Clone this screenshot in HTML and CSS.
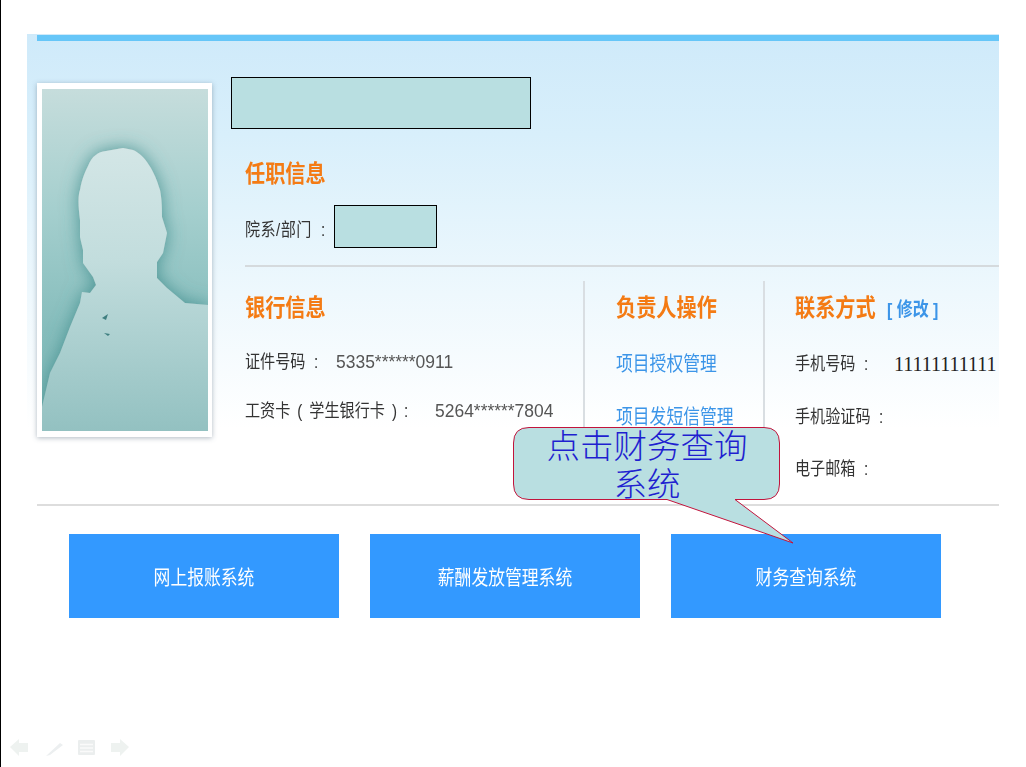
FILE: index.html
```html
<!DOCTYPE html>
<html>
<head>
    <meta charset="UTF-8">
    <title>财务查询系统</title>
    <link rel="stylesheet" href="styles.css">
</head>
<body>
    <div class="slide">
        <div class="panel">
            <div class="bar"></div>
            <div class="name-mask"></div>
            <div class="profile">
                <div class="photo">
                    <svg width="166" height="342" viewBox="42 89 166 342">
                        <defs>
                            <linearGradient id="bg" x1="0" y1="0" x2="0" y2="1">
                                <stop offset="0" stop-color="#c6dddc"/>
                                <stop offset="0.35" stop-color="#a5cfce"/>
                                <stop offset="0.7" stop-color="#86bdbc"/>
                                <stop offset="1" stop-color="#7db6b5"/>
                            </linearGradient>
                            <linearGradient id="fig" x1="0" y1="0" x2="0" y2="1">
                                <stop offset="0" stop-color="#d3e6e6"/>
                                <stop offset="0.4" stop-color="#c2dddd"/>
                                <stop offset="1" stop-color="#93c1c1"/>
                            </linearGradient>
                            <filter id="glow" x="-20%" y="-20%" width="140%" height="140%">
                                <feDropShadow dx="0" dy="0" stdDeviation="9" flood-color="#3f8e8e" flood-opacity="0.9"/>
                            </filter>
                        </defs>
                        <rect x="42" y="89" width="166" height="342" fill="url(#bg)"/>
                        <path filter="url(#glow)" fill="url(#fig)" d="M123 148 L133 150 C145 155 155 172 160 190 C162 200 162 210 162 217 L167 233 L163 253 L157 262 L157 278 L167 288 L185 303 L208 305 L208 431 L42 431 L42 407 L50 373 L60 353 L70 327 L80 303 L82 292 L90 293 L96 285 L93 277 L83 263 L83 250 L80 237 L80 220 C78 205 78 195 80 190 C82 178 86 170 88 166 C92 156 98 152 106 151 Z"/>
                        <path fill="#3f7f80" d="M102 318 L108 314 L106 320 Z M104 333 L110 334 L108 336 Z"/>
                    </svg>
                </div>
                <div class="info">
                    <h2 class="heading"><span class="sq">任职信息</span></h2>
                    <div class="dept">
                        <span class="dept-label"><span class="sq">院系/部门&nbsp;&nbsp;:</span></span>
                        <div class="dept-mask"></div>
                    </div>
                    <div class="rule"></div>
                    <div class="cols">
                        <div class="col col-bank">
                            <h2 class="heading"><span class="sq">银行信息</span></h2>
                            <div class="row first"><span class="sq">证件号码&nbsp;&nbsp;:</span><span class="sq num num-id">5335******0911</span></div>
                            <div class="row second"><span class="sq wide">工资卡 ( 学生银行卡 ) :</span><span class="sq num num-card">5264******7804</span></div>
                        </div>
                        <div class="col col-ops">
                            <h2 class="heading"><span class="sq">负责人操作</span></h2>
                            <div class="row first link"><span class="sq">项目授权管理</span></div>
                            <div class="row next link"><span class="sq">项目发短信管理</span></div>
                        </div>
                        <div class="col col-contact">
                            <h2 class="heading"><span class="sq">联系方式</span><a class="edit"><span class="sq">[ 修改 ]</span></a></h2>
                            <div class="row first"><span class="sq">手机号码&nbsp;&nbsp;:</span><span class="phone">11111111111</span></div>
                            <div class="row next"><span class="sq">手机验证码&nbsp;&nbsp;:</span></div>
                            <div class="row last"><span class="sq">电子邮箱&nbsp;&nbsp;:</span></div>
                        </div>
                    </div>
                </div>
            </div>
        </div>
        <div class="buttons">
            <div class="btn"><span class="sq">网上报账系统</span></div>
            <div class="btn"><span class="sq">薪酬发放管理系统</span></div>
            <div class="btn"><span class="sq">财务查询系统</span></div>
        </div>

        <div class="callout">
            <svg width="290" height="125" viewBox="512 426 290 125">
                <path fill="#b9dfe1" stroke="#c2143c" stroke-width="1" d="M529 427.5 H764 Q779.5 427.5 779.5 443 V484 Q779.5 499.5 764 499.5 H735 L793 543 L667 499.5 H529 Q513.5 499.5 513.5 484 V443 Q513.5 427.5 529 427.5 Z"/>
            </svg>
            <p class="callout-text">点击财务查询<br>系统</p>
        </div>

        <div class="nav">
            <svg width="125" height="22" viewBox="0 0 125 22">
                <path fill="#eef2f0" d="M0 10 L9 2 V6 H18 V15 H9 V19 Z"/>
                <path fill="#eceff0" d="M36 19 L50 6 L53 8 L40 18 Z"/>
                <rect x="68" y="3" width="17" height="15" rx="1" fill="#ebeeee"/>
                <path stroke="#fafafa" stroke-width="1.5" d="M70 7.5 H83 M70 11 H83 M70 14.5 H83"/>
                <path fill="#eef2f0" d="M119 10 L110 2 V6 H101 V15 H110 V19 Z"/>
            </svg>
        </div>
    </div>
</body>
</html>
```

FILE: styles.css
```css
* {
    box-sizing: border-box;
}
body {
    margin: 0;
    background-color: #fff;
    overflow: hidden;
    font-family: "Liberation Sans", "Noto Sans CJK SC", sans-serif;
}
.slide {
    position: relative;
    width: 1026px;
    height: 767px;
    border-left: 1px solid #000;
    padding-top: 34px;
}
.sq {
    display: inline-block;
    white-space: nowrap;
    transform: scaleX(.84);
    transform-origin: left center;
}

.panel {
    position: relative;
    margin-left: 26px;
    width: 972px;
    height: 472px;
    padding: 1px 0 0 10px;
    background: linear-gradient(#cfeafa 0, #d8effb 100px, #eef8fd 260px, #fff 395px);
}
.panel::after {
    content: "";
    position: absolute;
    left: 10px;
    right: 0;
    bottom: 0;
    height: 2px;
    background-color: #ddd;
}
.bar {
    height: 6px;
    background-color: #66c6f8;
}
.name-mask {
    position: absolute;
    left: 204px;
    top: 43px;
    width: 300px;
    height: 52px;
    background-color: #b9dfe1;
    border: 1px solid #000;
}
.profile {
    display: flex;
    margin-top: 42px;
}
.photo {
    width: 175px;
    height: 354px;
    padding: 6px 4px 6px 5px;
    background-color: #fff;
    box-shadow: 0 1px 5px rgba(80,100,120,.45);
    flex: none;
}
.photo svg {
    display: block;
}

.info {
    flex: 1;
    margin-left: 33px;
    padding-top: 76px;
}
.heading {
    margin: 0;
    height: 30px;
    line-height: 30px;
    font-size: 24px;
    font-weight: bold;
    color: #f47b14;
}
.dept {
    display: flex;
    align-items: center;
    margin-top: 16px;
    height: 43px;
    font-size: 18px;
    color: #333;
}
.dept-label {
    width: 89px;
    padding-top: 3px;
    letter-spacing: .5px;
}
.dept-mask {
    width: 103px;
    height: 43px;
    background-color: #b9dfe1;
    border: 1px solid #000;
}
.rule {
    height: 2px;
    margin-top: 17px;
    background-color: #d5dadd;
}

.cols {
    display: flex;
    margin-top: 14px;
    height: 160px;
}
.col {
    padding-top: 12px;
}
.col-bank {
    width: 340px;
    border-right: 2px solid #d9dee2;
}
.col-ops {
    width: 180px;
    padding-left: 31px;
    border-right: 2px solid #d9dee2;
}
.col-contact {
    flex: 1;
    padding-left: 30px;
}
.row {
    position: relative;
    height: 24px;
    line-height: 24px;
    font-size: 18px;
    color: #333;
    white-space: nowrap;
}
.row.first {
    margin-top: 27px;
}
.col-ops .row.first,
.col-contact .row.first {
    margin-top: 29px;
}
.row.second {
    margin-top: 25px;
}
.row.next {
    margin-top: 29px;
}
.row.last {
    margin-top: 28px;
}
.wide {
    word-spacing: 3.3px;
}
.link {
    font-size: 20px;
    color: #3c95e8;
}
.num {
    color: #555;
    transform: scaleX(.97);
}
.num-id {
    position: absolute;
    left: 91px;
}
.num-card {
    position: absolute;
    left: 190px;
}
.phone {
    position: absolute;
    left: 99px;
    font-family: "Liberation Serif", serif;
    font-size: 20px;
    color: #222;
}
.col-bank .row > .sq:first-child {
    width: 100%;
}
.edit {
    display: inline-block;
    position: relative;
    top: 2px;
    left: -1px;
    font-size: 19px;
    color: #3c95e8;
    vertical-align: top;
}
.heading .sq:first-child {
    width: 93px;
}

.buttons {
    display: flex;
    gap: 31px;
    margin: 28px 0 0 68px;
}
.btn {
    width: 270px;
    height: 84px;
    background-color: #39f;
    color: #fff;
    font-size: 20px;
    display: flex;
    align-items: center;
    justify-content: center;
}
.btn .sq {
    transform-origin: center;
}

.callout {
    position: absolute;
    left: 511px;
    top: 426px;
    width: 290px;
    height: 125px;
}
.callout svg {
    display: block;
}
.callout-text {
    position: absolute;
    left: 0;
    top: 2px;
    width: 270px;
    margin: 0;
    text-align: center;
    font-family: "Liberation Serif", "Noto Sans CJK SC", serif;
    font-size: 33.5px;
    font-weight: 300;
    line-height: 38px;
    color: #1f1fd0;
}
.nav {
    position: absolute;
    left: 9px;
    top: 737px;
}
```
